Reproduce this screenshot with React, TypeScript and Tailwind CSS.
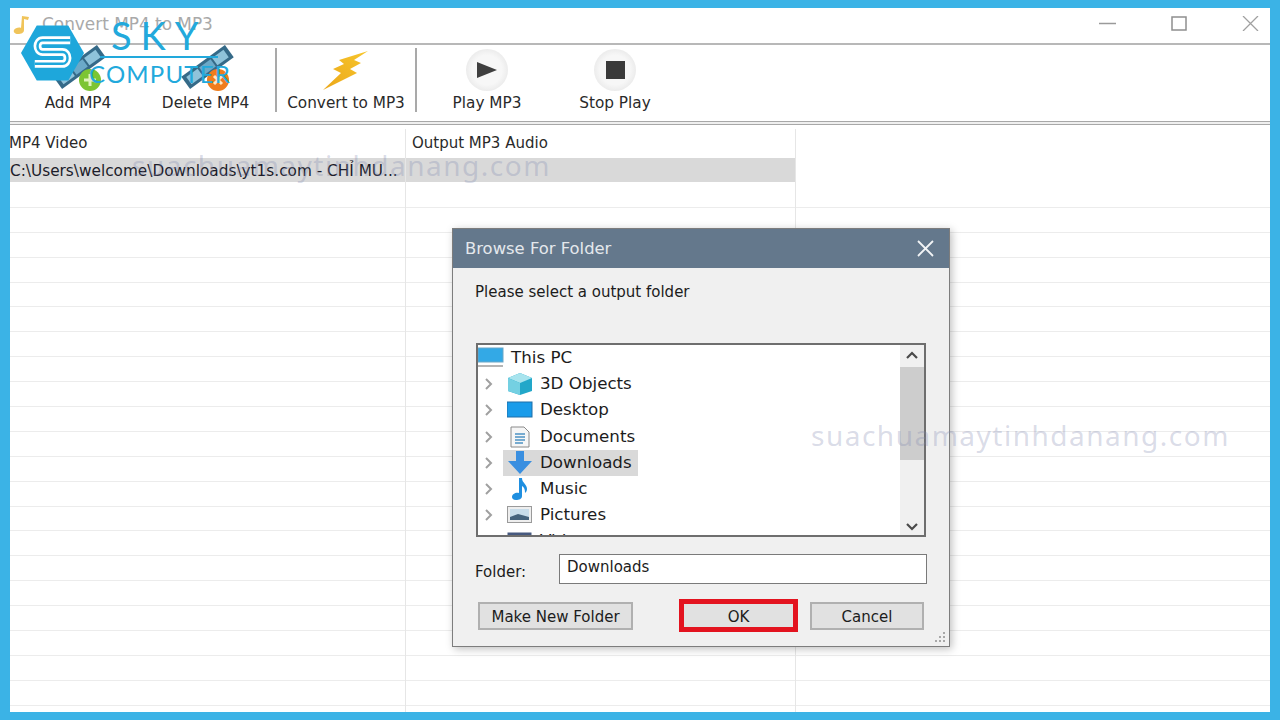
import type { ReactNode } from "react";

const font = { fontFamily: '"DejaVu Sans", "Liberation Sans", sans-serif' };

// Film strip, drawn on the logo overlap next to Add and Delete.
function FilmIcon({ badge, sign }: { badge: string; sign: "plus" | "x" }) {
  return (
    <svg width="64" height="46" viewBox="-3 -1 64 46">
      <g transform="rotate(-36 30 22)">
        <rect x="4" y="14" width="54" height="15" fill="#356a88" />
        <rect x="8" y="17" width="14" height="9" fill="#8fc3da" />
        <rect x="24" y="17" width="14" height="9" fill="#6ba9c8" />
        <rect x="40" y="17" width="14" height="9" fill="#8fc3da" />
      </g>
      <circle cx="41" cy="34" r="11" fill={badge} />
      {sign === "plus" ? (
        <path d="M35 34h12M41 28v12" stroke="#dff3bd" strokeWidth="3" />
      ) : (
        <path d="M37 30l8 8M45 30l-8 8" stroke="#ffe6c0" strokeWidth="3" />
      )}
    </svg>
  );
}

function RoundIcon({ children }: { children: ReactNode }) {
  return (
    <div className="flex h-[42px] w-[42px] items-center justify-center rounded-full bg-[radial-gradient(circle,#f7f7f7_50%,#dcdcdc_100%)]">
      {children}
    </div>
  );
}

function ToolButton({ icon, label, width }: { icon: ReactNode; label: string; width: string }) {
  return (
    <div className={`flex h-full flex-col items-center justify-end ${width}`}>
      <div className="flex flex-1 items-end justify-center pb-[2px]">{icon}</div>
      <span className="whitespace-nowrap pb-[8px] text-[15.3px] leading-[20px] text-[#2a2a2a]">{label}</span>
    </div>
  );
}

function TreeRow({ icon, label, active, root }: { icon: ReactNode; label: string; active?: boolean; root?: boolean }) {
  return (
    <div className="flex h-[26.2px] shrink-0 items-center">
      {!root && (
        <svg width="12" height="14" viewBox="0 0 12 14" className="ml-[5px] mr-[8px] shrink-0">
          <path d="M3 2l5 5-5 5" fill="none" stroke="#a0a0a0" strokeWidth="2" />
        </svg>
      )}
      <div className={`flex h-[26px] items-center pr-[6px] ${active ? "bg-[#d9d9d9]" : ""} ${root ? "-ml-[4px]" : ""}`}>
        <div className="ml-[4px] mr-[7px] flex w-[26px] justify-center">{icon}</div>
        <span className="pb-[2px] text-[16.7px] leading-[20px] text-[#1c1c1c]">{label}</span>
      </div>
    </div>
  );
}

function Dialog() {
  return (
    <div className="absolute left-[452px] top-[228px] flex h-[419px] w-[498px] flex-col border border-[#7d7d7d] bg-[#f0f0f0] shadow-[2px_2px_8px_rgba(0,0,0,0.25)]">
      <div className="flex h-[39px] shrink-0 items-center justify-between bg-[#64788c] pl-[12px] pr-[15px]">
        <span className="pt-[1px] text-[16.4px] text-[#e4e8ec]">Browse For Folder</span>
        <svg width="17" height="17" viewBox="0 0 17 17">
          <path d="M1 1l15 15M16 1L1 16" stroke="#f2f4f6" strokeWidth="1.8" />
        </svg>
      </div>
      <div className="flex flex-1 flex-col px-[22px]">
        <p className="mt-[14px] h-[61px] text-[15px] leading-[20px] text-[#1c1c1c]">Please select a output folder</p>
        <div className="relative ml-[1px] flex h-[194px] w-[450px] flex-col overflow-hidden border-2 border-[#6e6e6e] bg-white">
          <TreeRow root label="This PC" icon={
            <svg width="26" height="22" viewBox="0 0 26 22">
              <rect x="0" y="1" width="25" height="14" fill="#33a9e6" stroke="#6aa6c6" />
              <rect x="0" y="18" width="25" height="2" fill="#b5b5b5" />
            </svg>
          } />
          <TreeRow label="3D Objects" icon={
            <svg width="26" height="24" viewBox="0 0 26 24">
              <path d="M13 1l12 5v13l-12 4L1 19V6z" fill="#22a7c9" />
              <path d="M1 6l12-5 12 5-12 5z" fill="#a8e4ee" />
              <path d="M1 6l12 5v12L1 19z" fill="#74d0e2" />
            </svg>
          } />
          <TreeRow label="Desktop" icon={
            <svg width="26" height="18" viewBox="0 0 26 18">
              <rect x="0" y="1" width="25" height="15" fill="#1a9cea" stroke="#1f6fa8" />
            </svg>
          } />
          <TreeRow label="Documents" icon={
            <svg width="20" height="22" viewBox="0 0 20 22">
              <path d="M1 1h13l5 5v15H1z" fill="#f6f6f6" stroke="#8a8a8a" />
              <path d="M5 8h10M5 11h10M5 14h10M5 17h8" stroke="#4d93c4" strokeWidth="1.5" />
            </svg>
          } />
          <TreeRow active label="Downloads" icon={
            <svg width="26" height="24" viewBox="0 0 26 24">
              <path d="M9 0h8v10h8L13 23 1 10h8z" fill="#3a8fe0" />
            </svg>
          } />
          <TreeRow label="Music" icon={
            <svg width="20" height="24" viewBox="0 0 20 24">
              <path d="M9 1h3c0 5 5 6 5 11 0 2-1 3-2 4 0-4-1-6-3-7v10c0 3-3 4-6 4s-4-2-4-3c0-3 4-5 7-4z" fill="#1f8fe0" />
            </svg>
          } />
          <TreeRow label="Pictures" icon={
            <svg width="26" height="18" viewBox="0 0 26 18">
              <rect x="0.5" y="0.5" width="24" height="16" fill="#eeeeee" stroke="#9a9a9a" />
              <rect x="3" y="3" width="19" height="11" fill="#c7dcea" />
              <path d="M3 11l8-3 11 3v3H3z" fill="#44627c" />
            </svg>
          } />
          <TreeRow label="Videos" icon={
            <svg width="26" height="18" viewBox="0 0 26 18">
              <rect x="0.5" y="0.5" width="24" height="16" fill="#47597f" />
            </svg>
          } />
          <div className="absolute bottom-0 right-0 top-0 flex w-[24px] flex-col items-center justify-between bg-[#f0f0f0] pb-[4px] pt-[6px]">
            <svg width="14" height="9" viewBox="0 0 14 9">
              <path d="M2 7l5-5 5 5" fill="none" stroke="#4a4a4a" strokeWidth="2.2" />
            </svg>
            <svg width="14" height="9" viewBox="0 0 14 9">
              <path d="M2 2l5 5 5-5" fill="none" stroke="#4a4a4a" strokeWidth="2.2" />
            </svg>
            <div className="absolute left-0 top-[22px] h-[93px] w-[24px] bg-[#cdcdcd]" />
          </div>
        </div>
        <div className="mt-[17px] flex h-[30px] items-center">
          <span className="w-[84px] pt-[7px] text-[15px] text-[#1c1c1c]">Folder:</span>
          <div className="flex h-[30px] w-[368px] items-center border border-[#7a7a7a] bg-white pb-[3px] pl-[7px] text-[15px] text-[#1c1c1c]">
            Downloads
          </div>
        </div>
        <div className="relative mt-[15px] flex items-center">
          <div className="ml-[3px] flex h-[28px] w-[155px] items-center justify-center border-2 border-[#b0b0b0] bg-[#e1e1e1] pt-[3px] text-[15px] text-[#1c1c1c]">
            Make New Folder
          </div>
          <div className="ml-[46px] flex h-[33px] w-[119px] items-center justify-center border-[5px] border-[#e3131f] bg-[#e1e1e1] pt-[3px] text-[15px] text-[#1c1c1c]">
            OK
          </div>
          <div className="ml-[12px] flex h-[28px] w-[114px] items-center justify-center border-2 border-[#b0b0b0] bg-[#e1e1e1] pt-[3px] text-[15px] text-[#1c1c1c]">
            Cancel
          </div>
        </div>
      </div>
      <svg width="14" height="14" viewBox="0 0 14 14" className="absolute bottom-[2px] right-[2px]">
        <path d="M10 2h2v2h-2zM6 6h2v2H6zM10 6h2v2h-2zM2 10h2v2H2zM6 10h2v2H6zM10 10h2v2h-2z" fill="#a8a8a8" />
      </svg>
    </div>
  );
}

function Logo() {
  return (
    <div className="absolute left-[21px] top-[16px] h-[76px] w-[220px] text-[#22a9dc]" style={{ fontFamily: '"Lato", sans-serif' }}>
      <svg width="63" height="56" viewBox="0 0 64 56" className="absolute left-0 top-[9px]">
        <path d="M16 0h32l16 28-16 28H16L0 28z" fill="#1ea7db" />
        <path d="M50 15H22c-7 0-7 12 0 12h20c7 0 7 12 0 12H14" fill="none" stroke="#ffffff" strokeWidth="8" />
        <path d="M50 15H22c-7 0-7 12 0 12h20c7 0 7 12 0 12H14" fill="none" stroke="#1ea7db" strokeWidth="2.5" />
      </svg>
      <span className="absolute left-[90px] top-[-3px] text-[38px] leading-[44px] tracking-[9px]">SKY</span>
      <div className="absolute left-[79px] top-[40px] h-[2px] w-[118px] bg-[#22a9dc]" />
      <span className="absolute left-[68px] top-[44px] text-[24px] leading-[28px] tracking-[1.2px]">COMPUTER</span>
    </div>
  );
}

const rowLines = Array.from({ length: 21 }, (_, i) => i);

export default function App() {
  return (
    <div className="relative h-[720px] w-[1280px] overflow-hidden bg-[#3bb3e6] pb-[8px] pl-[10px] pr-[10px] pt-[8px]" style={font}>
      <div className="flex h-full flex-col overflow-hidden bg-white">
        {/* title bar */}
        <div className="flex h-[37px] shrink-0 items-center justify-between border-b-2 border-[#b8b8b8] pl-[1px] pr-[11px]">
          <div className="flex items-center">
            <svg width="20" height="22" viewBox="0 0 20 22" className="mr-[11px]">
              <path d="M11 2l7 1-1 3-4-1v11c0 3-3 4-6 4s-5-2-4-4 5-3 7-2z" fill="#f0c45a" />
            </svg>
            <span className="pb-[2px] text-[16.9px] text-[#a9a9a9]">Convert MP4 to MP3</span>
          </div>
          <div className="flex items-center gap-[55px] pb-[5px]">
            <svg width="17" height="3" viewBox="0 0 17 3"><path d="M0 1.5h17" stroke="#9a9a9a" strokeWidth="1.5" /></svg>
            <svg width="16" height="15" viewBox="0 0 16 15"><rect x="1" y="1" width="14" height="13" fill="none" stroke="#8f8f8f" strokeWidth="1.5" /></svg>
            <svg width="17" height="15" viewBox="0 0 17 15"><path d="M1 0l15 15M16 0L1 15" stroke="#a0a0a0" strokeWidth="1.3" /></svg>
          </div>
        </div>
        {/* toolbar */}
        <div className="flex h-[76px] shrink-0 items-stretch pt-[3px]">
          <ToolButton width="w-[136px]" label="Add MP4" icon={<FilmIcon badge="#7cc534" sign="plus" />} />
          <ToolButton width="w-[119px]" label="Delete MP4" icon={<FilmIcon badge="#ef7d1d" sign="x" />} />
          <div className="mb-[9px] ml-[10px] w-[2px] bg-[#a9a9a9]" />
          <ToolButton width="w-[138px]" label="Convert to MP3" icon={
            <svg width="50" height="40" viewBox="0 0 50 40">
              <defs>
                <linearGradient id="bolt" x1="1" y1="0" x2="0" y2="1">
                  <stop offset="0" stopColor="#f7c62c" />
                  <stop offset="1" stopColor="#eba71a" />
                </linearGradient>
              </defs>
              <path d="M47 0L18 9l5 4-11 5 8 4L2 39l34-17-7-4 11-6-7-3z" fill="url(#bolt)" />
            </svg>
          } />
          <div className="mb-[9px] w-[2px] bg-[#a9a9a9]" />
          <ToolButton width="w-[140px]" label="Play MP3" icon={
            <RoundIcon>
              <svg width="22" height="18" viewBox="0 0 22 18"><path d="M1 1l20 8-20 8z" fill="#3f3f3f" /></svg>
            </RoundIcon>
          } />
          <ToolButton width="w-[116px]" label="Stop Play" icon={
            <RoundIcon>
              <div className="h-[18px] w-[19px] bg-[#3a3a3a]" />
            </RoundIcon>
          } />
        </div>
        <div className="h-[4px] shrink-0 border-y border-[#a8a8a8] bg-[#efefef]" />
        {/* list */}
        <div className="relative flex-1 overflow-hidden">
          <div className="flex h-[33px] items-center">
            <span className="-ml-[1px] w-[396px] overflow-hidden pt-[3px] text-[15px] text-[#2a2a2a]">MP4 Video</span>
            <span className="pl-[7px] pt-[3px] text-[15px] text-[#2a2a2a]">Output MP3 Audio</span>
          </div>
          <div className="flex h-[24px] w-[785px] items-center bg-[#d9d9d9] pt-[3px] text-[15.3px] text-[#1c1c2a]">
            <span className="whitespace-nowrap">C:\Users\welcome\Downloads\yt1s.com - CHỈ MU...</span>
          </div>
          <div className="flex flex-col pt-px">
            {rowLines.map((i) => (
              <div key={i} className="h-[24.9px] shrink-0 border-b border-[#ececec]" />
            ))}
          </div>
          <div className="absolute bottom-0 left-[395px] top-[4px] w-px bg-[#e6e6e6]" />
          <div className="absolute bottom-0 left-[785px] top-[4px] w-px bg-[#e6e6e6]" />
        </div>
      </div>
      <Logo />
      <Dialog />
      {/* watermarks */}
      <span className="absolute left-[132px] top-[145px] text-[28px] leading-[40px] text-[#8088b0]/30" style={{ fontFamily: '"Noto Sans", sans-serif', letterSpacing: "1.5px" }}>suachuamaytinhdanang.com</span>
      <span className="absolute left-[811px] top-[415px] text-[28px] leading-[40px] text-[#8088b0]/30" style={{ fontFamily: '"Noto Sans", sans-serif', letterSpacing: "1.5px" }}>suachuamaytinhdanang.com</span>
    </div>
  );
}
